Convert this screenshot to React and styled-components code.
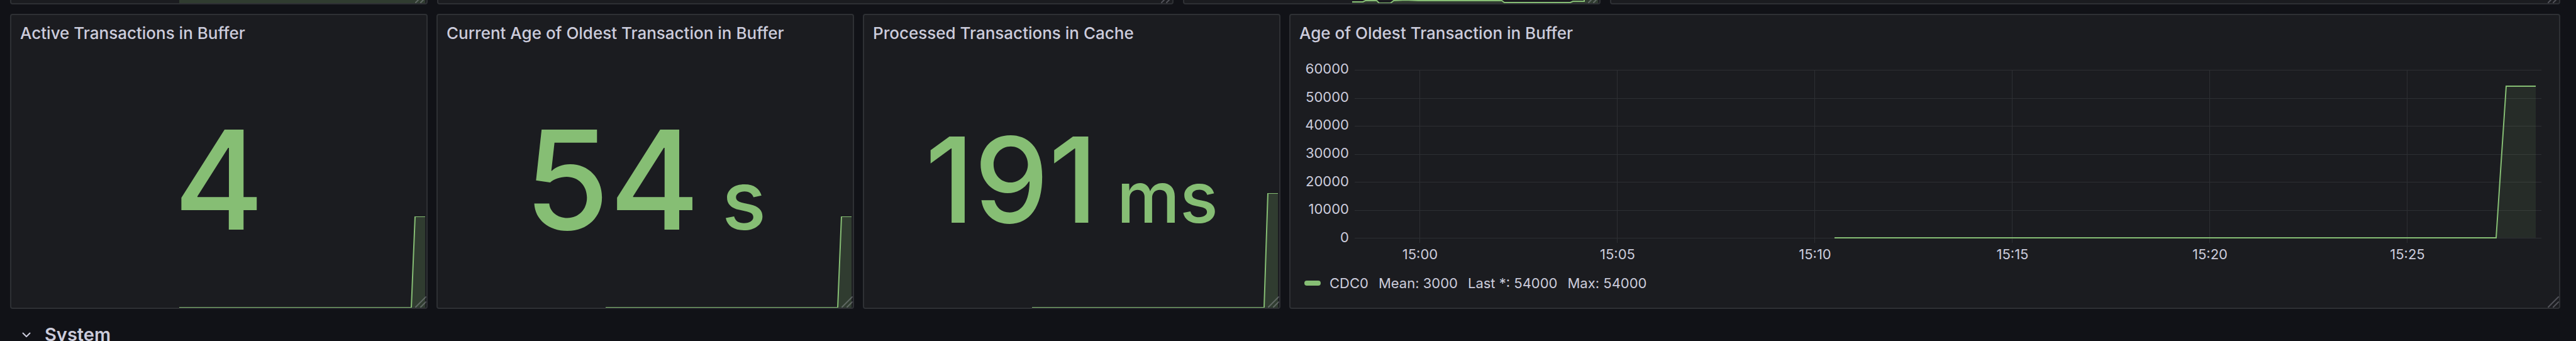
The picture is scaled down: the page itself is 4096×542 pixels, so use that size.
import React from "react";
import styled, { createGlobalStyle } from "styled-components";

const c = {
  page: "#111217",
  panel: "#1b1c20",
  border: "#2e3034",
  text: "#ccccdc",
  green: "#86be74",
  sparkFill: "rgba(134, 190, 116, 0.2)",
  areaFill: "rgba(134, 190, 116, 0.1)",
  grid: "#2d2f33",
  handle: "rgba(204, 204, 220, 0.3)",
};

const GlobalStyle = createGlobalStyle`
  *, *::before, *::after { box-sizing: border-box; }
  html, body { margin: 0; background: ${c.page}; }
  body {
    height: 100vh;
    overflow: hidden;
    color: ${c.text};
    font-family: Inter, Roboto, "Liberation Sans", sans-serif;
  }
  button {
    border: 0;
    padding: 0;
    background: none;
    color: inherit;
    font: inherit;
    cursor: pointer;
  }
`;

const Dashboard = styled.main`
  display: flex;
  flex-direction: column;
`;

const PanelRow = styled.div`
  display: grid;
  grid-template-columns: ${(p) => p.$columns};
  column-gap: ${(p) => p.$gap};
  padding: 0 25px 0 16px;
  margin-bottom: ${(p) => p.$after || "0"};
`;

const Panel = styled.section`
  position: relative;
  display: flex;
  flex-direction: column;
  min-width: 0;
  overflow: hidden;
  background: ${c.panel};
  border: 2px solid ${c.border};
  border-radius: 4px;
`;

const ScrolledPanel = styled(Panel)`
  height: 7px;
  border-top: 0;
  border-top-left-radius: 0;
  border-top-right-radius: 0;
`;

const PanelTitle = styled.h2`
  margin: 0;
  padding: 0 14px;
  font-size: 26px;
  line-height: 58px;
  font-weight: 500;
  white-space: nowrap;
`;

const StatBody = styled.div`
  flex: 1;
  display: flex;
  align-items: center;
  justify-content: center;
`;

const StatValue = styled.div`
  display: flex;
  align-items: baseline;
  color: ${c.green};
  font-size: ${(p) => p.$size};
  line-height: 1;
  font-weight: 500;
`;

const StatUnit = styled.span`
  font-size: ${(p) => p.$size};
  line-height: 1;
  white-space: pre;
`;

const SparkSvg = styled.svg`
  position: absolute;
  left: 0;
  bottom: 0;
  display: block;
  width: 100%;
  height: ${(p) => p.$height};
`;

const HandleSvg = styled.svg`
  position: absolute;
  right: 0;
  bottom: 0;
  width: 18px;
  height: 18px;
`;

const Chart = styled.div`
  display: flex;
  padding: 16px 28px 0 0;
`;

const YAxis = styled.div`
  display: flex;
  flex-direction: column;
  justify-content: space-between;
  align-items: flex-end;
  width: 102px;
  height: 290px;
  padding-right: 9px;
  font-size: 22px;
  line-height: 22px;
`;

const PlotSvg = styled.svg`
  flex: 1;
  min-width: 0;
  height: 275px;
  margin-top: 13px;
`;

const XAxis = styled.div`
  display: flex;
  margin-top: 5px;
  padding: 0 84px 0 49px;
  font-size: 22px;
  line-height: 22px;
`;

const XTick = styled.span`
  flex: 1;
  text-align: center;
`;

const Legend = styled.div`
  display: flex;
  align-items: center;
  gap: 16px;
  padding: 24px 22px 28px;
  font-size: 22px;
  line-height: 22px;
  white-space: nowrap;
`;

const LegendSeries = styled.button`
  display: flex;
  align-items: center;
  gap: 14px;
`;

const LegendMark = styled.span`
  width: 26px;
  height: 8px;
  border-radius: 4px;
  background: ${c.green};
`;

const SectionToggle = styled.button`
  display: flex;
  align-items: center;
  align-self: flex-start;
  gap: 22px;
  margin: 26px 0 0 35px;
  font-size: 29px;
  line-height: 30px;
  font-weight: 500;
`;

const SectionTitle = styled.span`
  font-weight: 600;
`;

function ResizeHandle() {
  return (
    <HandleSvg viewBox="0 0 18 18" aria-hidden="true">
      <path
        d="M1 17 17 1M9 17l8-8"
        fill="none"
        stroke={c.handle}
        strokeWidth="2"
        strokeLinecap="round"
      />
    </HandleSvg>
  );
}

function Spark({ height, line, end = 658 }) {
  const first = line[0][0];
  const points = line.map((p) => p.join(",")).join(" ");
  return (
    <SparkSvg
      $height={`${height}px`}
      viewBox={`0 0 660 ${height}`}
      preserveAspectRatio="none"
      aria-hidden="true"
    >
      <polygon points={`${first},${height} ${points} ${end},${height}`} fill={c.sparkFill} />
      <polyline
        points={points}
        fill="none"
        stroke={c.green}
        strokeWidth="2"
        vectorEffect="non-scaling-stroke"
      />
    </SparkSvg>
  );
}

const stats = [
  { title: "Active Transactions in Buffer", value: "4", size: "219px", spark: 145 },
  {
    title: "Current Age of Oldest Transaction in Buffer",
    value: "54",
    unit: " s",
    size: "219px",
    unitSize: "131px",
    spark: 145,
  },
  {
    title: "Processed Transactions in Cache",
    value: "191",
    unit: " ms",
    size: "188px",
    unitSize: "113px",
    spark: 182,
  },
];

function StatPanel({ title, value, unit, size, unitSize, spark }) {
  return (
    <Panel>
      <PanelTitle>{title}</PanelTitle>
      <StatBody>
        <StatValue $size={size}>
          {value}
          {unit && <StatUnit $size={unitSize}>{unit}</StatUnit>}
        </StatValue>
      </StatBody>
      <Spark height={spark} line={[[267, spark], [636, spark], [642, 0], [658, 0]]} />
      <ResizeHandle />
    </Panel>
  );
}

const yTicks = [60000, 50000, 40000, 30000, 20000, 10000, 0];
const xTicks = ["15:00", "15:05", "15:10", "15:15", "15:20", "15:25"];

function AgeChartPanel() {
  return (
    <Panel>
      <PanelTitle>Age of Oldest Transaction in Buffer</PanelTitle>
      <Chart>
        <YAxis>
          {yTicks.map((t) => (
            <span key={t}>{t}</span>
          ))}
        </YAxis>
        <PlotSvg viewBox="0 0 1887 275" preserveAspectRatio="none" role="img" aria-label="CDC0">
          <g stroke={c.grid} strokeWidth="1">
            {yTicks.map((t, i) => {
              const y = Math.round((i * 267) / 6) + 0.5;
              return <line key={t} x1="0" x2="1887" y1={y} y2={y} vectorEffect="non-scaling-stroke" />;
            })}
            {xTicks.map((t, i) => {
              const x = 103 + i * 314 + 0.5;
              return <line key={t} x1={x} x2={x} y1="0" y2="275" vectorEffect="non-scaling-stroke" />;
            })}
          </g>
          <polygon points="1815,267 1831,26 1878,26 1878,267" fill={c.areaFill} />
          <polyline
            points="763,267 1815,267 1831,26 1878,26"
            fill="none"
            stroke={c.green}
            strokeWidth="2"
            vectorEffect="non-scaling-stroke"
          />
        </PlotSvg>
      </Chart>
      <XAxis>
        {xTicks.map((t) => (
          <XTick key={t}>{t}</XTick>
        ))}
      </XAxis>
      <Legend>
        <LegendSeries type="button">
          <LegendMark />
          CDC0
        </LegendSeries>
        <span>Mean: 3000</span>
        <span>Last *: 54000</span>
        <span>Max: 54000</span>
      </Legend>
      <ResizeHandle />
    </Panel>
  );
}

export default function App() {
  return (
    <>
      <GlobalStyle />
      <Dashboard>
        <PanelRow $columns="664fr 1171fr 664fr 1511fr" $gap="15px" $after="15px">
          <ScrolledPanel>
            <Spark height={5} line={[[267, -4], [658, -4]]} />
            <ResizeHandle />
          </ScrolledPanel>
          <ScrolledPanel>
            <ResizeHandle />
          </ScrolledPanel>
          <ScrolledPanel>
            <Spark
              height={5}
              line={[
                [267, 3], [284, 3], [288, 1], [306, 1], [310, 5], [328, 5], [333, 1],
                [352, 0], [372, 1], [480, 1], [505, 1], [509, 4], [614, 4], [618, 2],
                [636, 2], [636, -4], [658, -4],
              ]}
            />
            <ResizeHandle />
          </ScrolledPanel>
          <ScrolledPanel>
            <ResizeHandle />
          </ScrolledPanel>
        </PanelRow>

        <PanelRow $columns="664fr 664fr 664fr 2021fr" $gap="14px">
          {stats.map((s) => (
            <StatPanel key={s.title} {...s} />
          ))}
          <AgeChartPanel />
        </PanelRow>

        <SectionToggle type="button" aria-expanded="true">
          <svg width="14" height="10" viewBox="0 0 14 10" aria-hidden="true">
            <path
              d="M1.5 2.5 7 8l5.500-5.500"
              fill="none"
              stroke={c.text}
              strokeWidth="2"
              strokeLinecap="round"
              strokeLinejoin="round"
            />
          </svg>
          <SectionTitle>System</SectionTitle>
        </SectionToggle>
      </Dashboard>
    </>
  );
}
